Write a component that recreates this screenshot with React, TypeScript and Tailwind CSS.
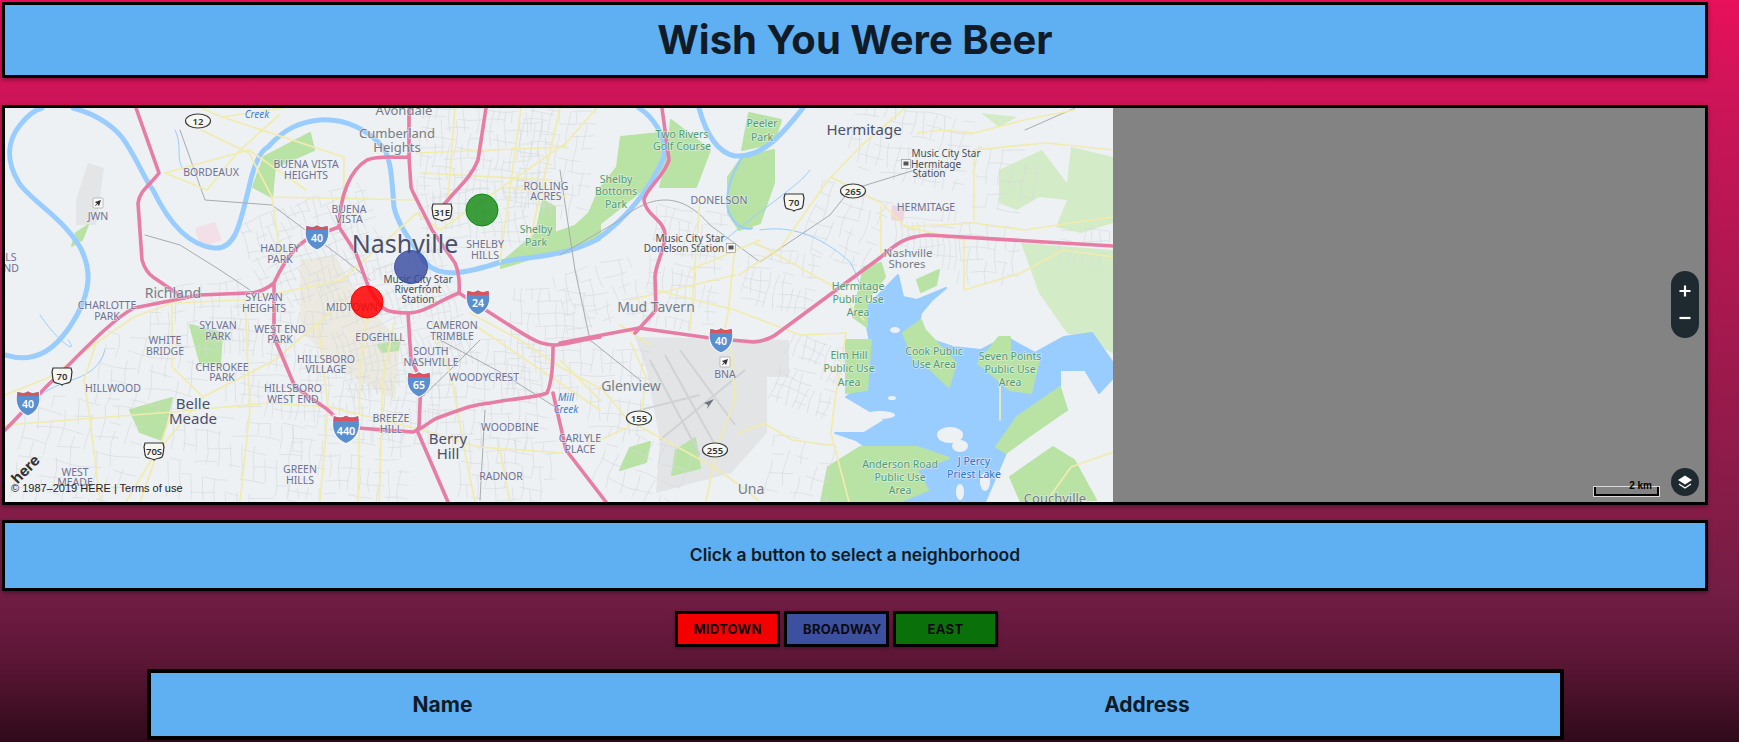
import React from 'react';

type Label = [string, number, number, number?];

// neighborhood names, upper case purple-grey
const hoods: Label[] = [
  ['BORDEAUX', 211, 176], ['BUENA VISTA', 306, 168], ['HEIGHTS', 306, 179], ['BUENA', 349, 213], ['VISTA', 349, 223],
  ['ROLLING', 546, 190], ['ACRES', 546, 200], ['SHELBY', 485, 248], ['HILLS', 485, 259], ['HADLEY', 280, 252], ['PARK', 280, 263],
  ['SYLVAN', 264, 301], ['HEIGHTS', 264, 312], ['CHARLOTTE', 107, 309], ['PARK', 107, 320], ['MIDTOWN', 352, 311],
  ['SYLVAN', 218, 329], ['PARK', 218, 340], ['WEST END', 280, 333], ['PARK', 280, 343], ['EDGEHILL', 380, 341],
  ['CAMERON', 452, 329], ['TRIMBLE', 452, 340], ['WHITE', 165, 344], ['BRIDGE', 165, 355], ['SOUTH', 431, 355], ['NASHVILLE', 431, 366],
  ['HILLSBORO', 326, 363], ['VILLAGE', 326, 373], ['CHEROKEE', 222, 371], ['PARK', 222, 381], ['WOODYCREST', 484, 381],
  ['HILLWOOD', 113, 392], ['HILLSBORO', 293, 392], ['WEST END', 293, 403], ['BREEZE', 391, 422], ['HILL', 391, 433],
  ['WOODBINE', 510, 431], ['CARLYLE', 580, 442], ['PLACE', 580, 453], ['WEST', 75, 476], ['MEADE', 75, 486],
  ['GREEN', 300, 473], ['HILLS', 300, 484], ['RADNOR', 501, 480], ['DONELSON', 719, 204], ['HERMITAGE', 926, 211],
  ['LS', 11, 261], ['ND', 11, 272], ['JWN', 98, 220], ['BNA', 725, 378],
];

const towns: Label[] = [
  ['Avondale', 404, 115, 13], ['Cumberland', 397, 138, 13], ['Heights', 397, 152, 13], ['Richland', 173, 298, 14],
  ['Mud Tavern', 656, 312, 14], ['Glenview', 631, 391, 14], ['Una', 751, 494, 14], ['Couchville', 1055, 503, 13],
  ['Nashville', 908, 257, 11.5], ['Shores', 907, 268, 11.5],
];

const cities: Label[] = [
  ['Nashville', 405, 253, 25], ['Belle', 193, 409, 15], ['Meade', 193, 424, 15], ['Berry', 448, 444, 15], ['Hill', 448, 459, 15],
  ['Hermitage', 864, 135, 15],
];

const parks: Label[] = [
  ['Shelby', 536, 233], ['Park', 536, 246], ['Peeler', 762, 127], ['Park', 762, 141], ['Two Rivers', 682, 138], ['Golf Course', 682, 150],
  ['Shelby', 616, 183], ['Bottoms', 616, 195], ['Park', 616, 208], ['Hermitage', 858, 290], ['Public Use', 858, 303], ['Area', 858, 316],
  ['Elm Hill', 849, 359], ['Public Use', 849, 372], ['Area', 849, 386], ['Cook Public', 934, 355], ['Use Area', 934, 368],
  ['Seven Points', 1010, 360], ['Public Use', 1010, 373], ['Area', 1010, 386], ['Anderson Road', 900, 468], ['Public Use', 900, 481], ['Area', 900, 494],
];

const transit: Label[] = [
  ['Music City Star', 418, 283], ['Riverfront', 418, 293], ['Station', 418, 303], ['Music City Star', 690, 242], ['Donelson Station', 684, 252],
  ['Music City Star', 946, 157], ['Hermitage', 936, 168], ['Station', 929, 177],
];

const water: Label[] = [
  ['Creek', 257, 118], ['Mill', 566, 401], ['Creek', 566, 413],
];

const lakePts = '898,275 903,297 917,300 946,288 932,300 921,313 917,333 932,340 953,347 981,350 1006,337 1035,353 1064,337 1092,333 1113,363 1113,378 1099,393 1085,370 1060,370 1060,390 1067,410 1024,423 996,443 1006,453 985,502 860,502 860,473 874,453 856,440 835,433 864,433 885,420 846,397 856,390 871,347 867,327 867,307';

// pale woodland
const forests = [
  '1021,243 1113,250 1113,353 1067,333 1039,293',
  '999,170 1042,150 1067,183 1071,147 1113,157 1113,223 1081,233 1056,227 1067,200 1039,197 1017,210 999,203',
  '981,113 1017,117 999,127',
  '1040,240 1060,262 1035,270',
];

// mown parks and public use areas
const parkShapes = [
  '621,137 660,133 669,160 646,187 596,227 560,247 560,240 589,213 599,190 617,167',
  '671,120 710,150 696,187 660,187 667,160',
  '742,157 774,150 774,183 760,223 739,230 728,213 728,177',
  '749,113 781,120 774,143 742,150',
  '501,263 536,233 543,200 555,207 555,233 600,217 600,240 540,256 501,268',
  '264,157 310,133 314,150 275,167 272,197 253,187',
  '190,325 222,333 220,365 200,362',
  '130,410 172,398 162,440 140,432',
  '76,233 88,225 82,240 72,246',
  '378,345 400,340 398,350 382,352',
  '630,448 650,442 646,462 620,470',
  '676,450 695,438 700,468 672,475',
  '903,333 921,320 925,330 956,363 949,387 931,370 914,360',
  '999,337 1010,337 1010,353 1039,360 1031,393 1010,390 978,363',
  '828,467 860,447 917,447 949,458 917,470 928,490 899,502 821,502',
  '846,340 871,340 867,390 846,393',
  '864,267 881,263 885,277 867,300 867,327 853,317',
  '917,280 939,270 936,285 921,292',
  '996,447 1017,417 1060,387 1067,410 1028,437 1006,453',
  '1053,447 1074,460 1096,500 1021,502 1010,477',
];

const rivers = [
  { d: 'M5 355 C34 364 57 352 78 313 C90 290 92 270 80 247 C60 215 30 200 19 183 C5 160 8 140 20 125 C28 115 34 110 42 108', w: 5 },
  { d: 'M73 108 C100 115 118 130 126 143 C140 165 145 180 153 190 C165 215 185 245 214 248 C235 250 240 225 249 187 C255 160 262 150 268 147 C285 128 300 122 320 120 C345 118 370 130 385 150 C392 165 392 185 394 207 C398 225 410 240 425 262 C440 280 470 272 501 262 C530 256 560 258 596 240 C625 220 650 190 664 157 C668 135 650 115 639 108', w: 5 },
  { d: 'M699 108 C705 130 715 152 735 156 C765 158 785 130 803 108', w: 5 },
  { d: 'M742 157 C728 180 722 205 732 218 C738 228 748 230 752 228', w: 2 },
  { d: 'M760 230 C790 225 820 235 850 262 C856 272 858 280 862 290', w: 1 },
  { d: 'M175 130 C185 150 170 170 195 175', w: 1 },
  { d: 'M40 315 C60 345 80 355 68 340', w: 1 },
  { d: 'M105 350 C95 385 60 375 35 400', w: 1 },
  { d: 'M725 240 C760 210 800 185 810 170', w: 1 },
];

const highways = [
  'M560 343 L639 328 L710 338 L753 342 C765 341 772 338 778 333 L881 257 C895 245 903 237 928 235 L1113 246',
  'M600 337 C580 340 565 345 555 345 C540 345 530 338 517 330 L459 293 C440 300 425 313 408 313 C395 313 388 312 383 308',
  'M459 293 C460 280 458 270 455 263 L432 230 C420 205 411 190 411 187 L409 157 L409 108',
  'M409 157 C395 158 380 155 367 160 C350 170 340 195 339 227 C325 232 315 236 306 240 C290 250 280 270 274 283 C265 290 255 293 249 293 L199 295 L134 308 C110 320 70 365 50 383 C35 398 20 415 5 430',
  'M339 227 L356 253 L367 283 C372 295 378 303 383 308',
  'M408 313 L411 360 L421 380 L419 427 L417 430 L448 502',
  'M274 283 L274 337 L295 387 L321 405 C330 410 338 420 344 427 L413 432 C425 428 430 420 440 417 C460 410 470 405 490 403 C515 398 535 398 547 393 C553 380 553 360 553 347',
  'M486 108 L478 160 C470 180 455 190 448 200 L436 213',
  'M136 108 L159 173 C150 185 140 190 138 203 L142 260 C145 270 150 275 153 277 L172 290 L184 298',
  'M662 108 L669 160 C665 175 645 190 644 200 C645 215 665 220 665 235 C665 250 655 265 655 277 L656 310 L635 333',
  'M553 393 L566 450 L606 502',
];

const arterials = [
  'M5 395 L50 377 L96 343 L134 317 L172 303 L245 300 L342 280 L417 213 L440 230',
  'M203 397 L275 360 L318 323 L344 300', 'M358 502 L360 367 L367 317', 'M379 502 L383 380 L394 323',
  'M172 412 L268 403 L329 407 L430 432 L478 447 L563 453', 'M126 502 L153 457 L203 397', 'M172 303 L172 367 L203 397',
  'M475 502 L465 453 L452 380 L432 323', 'M470 313 L520 340 L560 367 L603 390 L628 420 L714 467 L746 490 L760 502',
  'M735 247 L728 313 L724 333', 'M756 243 L831 285 L864 320', 'M739 275 L781 247 L828 180 L864 143 L905 108',
  'M631 343 L646 377 L642 410 L628 427 L600 440', 'M731 347 L735 400 L717 447 L706 502', 'M831 177 L881 203 L906 227 L964 240',
  'M881 207 L881 253', 'M903 227 L974 223 L1024 230 L1113 217', 'M964 240 L964 290 L1021 273 L1063 250 L1113 257',
  'M917 133 L942 130 L974 133 L1024 120 L1074 110', 'M974 150 L1046 143 L1113 150', 'M974 150 L974 220',
  'M846 333 L835 400 L831 433 L849 502', 'M739 433 L764 423 L792 440 L831 445', 'M1071 467 L1113 452 M1071 467 L1046 502',
  'M440 230 L566 143 L597 108', 'M455 108 L448 200', 'M421 173 L551 180', 'M417 153 L566 147', 'M509 187 L566 197', 'M521 108 L500 262', 'M560 108 L530 240',
  'M344 157 L222 117 L201 108 M283 108 L222 117', 'M165 173 L207 190 L237 153 L279 115', 'M165 173 L249 150 L306 190', 'M201 130 L249 153 L272 197 L417 200',
  'M272 197 L280 255 M344 157 L344 200', 'M100 500 L90 420 L84 380 L96 343', 'M5 425 L172 412', 'M240 502 L250 410 L245 300', 'M320 502 L328 407 L318 323',
  'M172 412 L140 502', 'M500 450 L510 502', 'M560 360 L600 400', 'M470 322 L600 410', 'M620 325 L650 345', 'M700 200 L690 330', 'M630 300 L735 275', 'M655 290 L735 310', 'M735 310 L800 335 L846 333',
  'M690 270 L760 240', 'M1000 380 L1000 420',
];

const rails = [
  'M180 130 L205 200 L272 205 L345 260 L370 280', 'M145 235 L180 245 L220 270 L250 290', 'M560 170 L575 270 L590 340 L640 380',
  'M440 340 L500 372 L560 410', 'M419 400 L450 370 L480 340', 'M560 255 L620 220 C650 195 680 190 710 225 L760 262 L830 215 L850 190 L915 170',
  'M480 500 L485 410', 'M1025 130 L1075 108',
];

// street patches: x, y, w, h, rotation, spacing
const patches: number[][] = [
  [420, 110, 130, 90, 3, 7], [520, 110, 70, 100, 5, 9], [420, 190, 120, 60, -6, 8], [250, 200, 130, 90, -20, 7], [330, 265, 130, 110, -18, 6],
  [150, 285, 90, 70, -6, 9], [230, 310, 90, 100, 5, 8], [320, 370, 120, 70, 4, 7], [430, 340, 110, 100, 4, 9], [510, 290, 80, 100, 4, 9],
  [460, 440, 90, 60, 3, 9], [290, 430, 110, 70, 4, 10], [100, 340, 100, 70, 10, 13], [20, 400, 110, 100, 10, 13], [170, 420, 130, 80, 6, 12],
  [590, 350, 50, 90, 3, 10], [650, 210, 70, 110, 8, 8], [745, 250, 70, 60, 10, 8], [560, 265, 80, 60, -15, 11],
  [780, 340, 60, 70, 20, 8], [850, 110, 110, 70, 10, 10], [895, 210, 60, 50, 0, 6], [960, 225, 60, 50, 3, 9], [810, 190, 70, 70, 20, 11],
  [975, 150, 60, 60, 5, 12], [1060, 230, 50, 30, 3, 8], [600, 440, 90, 60, 20, 14], [770, 440, 60, 60, 10, 15],
];

// wobbly, broken street lines so the patches do not read as a ruled grid
function streetPath(p: number[]) {
  const [x, y, w, h, , gap] = p;
  let d = '';
  for (let i = x; i <= x + w; i += gap) {
    for (let t = y; t < y + h; t += 12) {
      if (Math.sin(i * 3.1 + t * 1.7) > 0.55) continue;
      d += `M${(i + 1.6 * Math.sin(t * 0.13 + i)).toFixed(1)} ${t}L${(i + 1.6 * Math.sin((t + 12) * 0.13 + i)).toFixed(1)} ${t + 12}`;
    }
  }
  for (let j = y; j <= y + h; j += gap + 3) {
    for (let t = x; t < x + w; t += 12) {
      if (Math.sin(j * 2.3 + t * 1.9) > 0.55) continue;
      d += `M${t} ${(j + 1.6 * Math.sin(t * 0.11 + j)).toFixed(1)}L${t + 12} ${(j + 1.6 * Math.sin((t + 12) * 0.11 + j)).toFixed(1)}`;
    }
  }
  return d;
}

const Interstate = ({ x, y, n, s = 1 }: { x: number; y: number; n: string; s?: number }) => (
  <g transform={`translate(${x} ${y}) scale(${s})`}>
    <path d="M-11 -12 C-6 -10 -3 -10 0 -12.5 C3 -10 6 -10 11 -12 C13 -3 12 8 0 13 C-12 8 -13 -3 -11 -12Z" fill="#5a8fcf" stroke="#f4f6f8" strokeWidth="1.2" />
    <path d="M-10.5 -11 C-6 -9.5 -3 -9.5 0 -11.5 C3 -9.5 6 -9.5 10.5 -11 L10.8 -7 H-10.8Z" fill="#d8555f" />
    <text x="0" y="5" textAnchor="middle" fontSize={n.length > 2 ? 9.5 : 10.5} fontWeight="600" fill="#fff" fontFamily="'Noto Sans',sans-serif">{n}</text>
  </g>
);

const Oval = ({ x, y, n }: { x: number; y: number; n: string }) => (
  <g>
    <ellipse cx={x} cy={y} rx="12.5" ry="7" fill="#f7f7f2" stroke="#3c3c3c" strokeWidth="1.2" />
    <text x={x} y={y + 3.5} textAnchor="middle" fontSize="9.5" fontWeight="600" fill="#333" fontFamily="'Noto Sans',sans-serif">{n}</text>
  </g>
);

const UsShield = ({ x, y, n }: { x: number; y: number; n: string }) => (
  <g transform={`translate(${x} ${y})`}>
    <path d="M-9 -8 H9 L10 -4 C9 0 10 3 8 6 C5 8 2 7 0 9 C-2 7 -5 8 -8 6 C-10 3 -9 0 -10 -4Z" fill="#f7f7f2" stroke="#333" strokeWidth="1.2" />
    <text x="0" y="3.5" textAnchor="middle" fontSize="9.5" fontWeight="600" fill="#333" fontFamily="'Noto Sans',sans-serif">{n}</text>
  </g>
);

const Airport = ({ x, y }: { x: number; y: number }) => (
  <g transform={`translate(${x} ${y})`}>
    <rect x="-5" y="-5" width="10" height="10" rx="1" fill="#fbfbfb" stroke="#999" strokeWidth=".6" />
    <path d="M3 -3 L-3.2 -1 L-1 0.4 L-3 2.4 L-2.4 3 L-0.4 1 L1 3.2Z" fill="#333" />
  </g>
);

const Station = ({ x, y }: { x: number; y: number }) => (
  <g transform={`translate(${x} ${y})`}>
    <rect x="-4.5" y="-4.5" width="9" height="9" fill="#f6f6f6" stroke="#888" strokeWidth=".6" />
    <rect x="-2.5" y="-2.5" width="5" height="4" fill="#555" />
  </g>
);

function Labels({ items, size, fill, italic }: { items: Label[]; size: number; fill: string; italic?: boolean }) {
  return (
    <>
      {items.map(([t, x, y, s], i) => (
        <text
          key={i}
          x={x}
          y={y}
          textAnchor="middle"
          fontSize={s ?? size}
          fill={fill}
          fontStyle={italic ? 'italic' : undefined}
          fontFamily="'Noto Sans',sans-serif"
          stroke="#eef2f5"
          strokeWidth="1.6"
          paintOrder="stroke"
          strokeOpacity=".6"
        >
          {t}
        </text>
      ))}
    </>
  );
}

const NashvilleMap = () => (
  <svg viewBox="5 108 1108 394" className="block h-[394px] w-[1108px] shrink-0 bg-[#edf1f4]">
    {/* airports and built up ground */}
    <polygon points="635,337 789,340 789,377 767,377 767,433 731,473 656,493 660,440 646,367" fill="#e2e4e6" />
    <polygon points="88,163 104,168 96,225 76,225 76,200" fill="#e3e5e7" />
    <polygon points="300,260 335,255 360,300 400,340 395,400 340,370 300,330" fill="#ebe9e0" />
    <polygon points="195,228 215,222 222,240 200,248" fill="#f3dfe6" />
    <polygon points="892,205 905,208 903,222 891,220" fill="#efd5dc" />
    {forests.map((p, i) => <polygon key={i} points={p} fill="#d3ebc7" />)}
    <polygon points={lakePts} fill="#9acdff" strokeLinejoin="round" stroke="#9acdff" strokeWidth="2" />
    {parkShapes.map((p, i) => <polygon key={i} points={p} fill="#b9e2a5" strokeLinejoin="round" stroke="#b9e2a5" strokeWidth="2" />)}
    <g fill="#edf1f4">
      <ellipse cx="895" cy="330" rx="5" ry="3" />
      <ellipse cx="950" cy="435" rx="13" ry="8" />
      <ellipse cx="960" cy="446" rx="8" ry="6" />
      <ellipse cx="880" cy="415" rx="15" ry="4" />
      <ellipse cx="960" cy="492" rx="4" ry="8" />
      <ellipse cx="985" cy="482" rx="5" ry="9" />
      <ellipse cx="892" cy="398" rx="4" ry="2" />
    </g>
    {/* minor streets */}
    <g stroke="#d6dadc" strokeWidth=".6" fill="none">
      {patches.map((p, i) => (
        <path key={i} d={streetPath(p)} transform={`rotate(${p[4]} ${p[0] + p[2] / 2} ${p[1] + p[3] / 2})`} />
      ))}
    </g>
    {/* runways */}
    <g stroke="#d0d2d4" strokeWidth="2">
      <path d="M650 360L700 455M665 355L715 445M680 350L735 425M640 410L700 395M660 440L745 370" />
    </g>
    <g fill="none" strokeLinecap="round" strokeLinejoin="round">
      {rivers.map((r, i) => <path key={i} d={r.d} stroke="#9acdff" strokeWidth={r.w} />)}
      {rails.map((d, i) => <path key={i} d={d} stroke="#a9abac" strokeWidth="1" />)}
      {arterials.map((d, i) => <path key={i} d={d} stroke="#f1ebad" strokeWidth="1.7" />)}
      {highways.map((d, i) => <path key={i} d={d} stroke="#e77ca5" strokeWidth="3.6" />)}
    </g>
    <Labels items={hoods} size={10.5} fill="#6f7191" />
    <Labels items={towns} size={13} fill="#777c84" />
    <Labels items={cities} size={15} fill="#4b4f68" />
    <Labels items={parks} size={10.5} fill="#4f9c70" />
    <Labels items={transit} size={10} fill="#4a4c55" />
    <Labels items={water} size={10} fill="#3d7fd0" italic />
    <Labels items={[['J Percy', 974, 465], ['Priest Lake', 974, 478]]} size={10.5} fill="#2f74c9" />
    <Oval x={198} y={121} n="12" />
    <Oval x={853} y={191} n="265" />
    <Oval x={639} y={418} n="155" />
    <Oval x={715} y={450} n="255" />
    <UsShield x={442} y={212} n="31E" />
    <UsShield x={794} y={202} n="70" />
    <UsShield x={62} y={376} n="70" />
    <UsShield x={154} y={451} n="70S" />
    <Interstate x={317} y={237} n="40" />
    <Interstate x={478} y={302} n="24" />
    <Interstate x={28} y={403} n="40" />
    <Interstate x={419} y={384} n="65" />
    <Interstate x={346} y={429} n="440" s={1.15} />
    <Interstate x={721} y={340} n="40" />
    <Airport x={98} y={203} />
    <Airport x={725} y={362} />
    <Station x={731} y={248} />
    <Station x={906} y={164} />
    <path d="M714 399L704 403L708 405L707 409Z" fill="#6f7580" />
    <circle cx="482" cy="210" r="16" fill="#008000" fillOpacity=".75" stroke="#008000" strokeOpacity=".85" />
    <circle cx="411" cy="267" r="16.5" fill="#34499f" fillOpacity=".8" stroke="#34499f" strokeOpacity=".85" />
    <circle cx="367" cy="302" r="16" fill="#ff0000" fillOpacity=".85" stroke="#ff0000" />
  </svg>
);

const panel = 'border-[3px] border-black bg-[#5eb0f2] shadow-[0_2px_4px_rgba(0,0,0,0.35)]';
const btn = 'h-[36px] w-[105px] border-[3px] border-black pt-[2px] text-[13px] font-bold tracking-[0.3px] text-[#0b0b0f] uppercase shadow-[0_1px_3px_rgba(0,0,0,0.35)]';

export default function App() {
  return (
    <div className="min-h-screen overflow-hidden bg-[linear-gradient(180deg,#e8105a_0%,#cf1458_12%,#841c47_69%,#721d44_80%,#5c1636_89%,#2f0a1a_100%)] px-[2px] pt-[2px] [font-family:Inter,sans-serif]">
      <div className="w-[1706px]">
        <header className={`${panel} flex h-[76px] items-center justify-center`}>
          <h1 className="text-[40px] font-bold text-[#101b27]">Wish You Were Beer</h1>
        </header>

        <div className="relative mt-[27px] flex h-[400px] border-[3px] border-black bg-[#838383] shadow-[0_2px_4px_rgba(0,0,0,0.3)]">
          <NashvilleMap />
          <div className="absolute bottom-[8px] left-[6px] text-[11px] leading-none text-[#222] [font-family:'Liberation_Sans',sans-serif]">© 1987–2019 HERE | Terms of use</div>
          <div className="absolute bottom-[16px] left-[14px] origin-bottom-left -rotate-45 text-[15px] leading-none font-bold text-[#333]">here</div>

          <div className="absolute top-[163px] right-[6px] flex h-[67px] w-[28px] flex-col items-center justify-between rounded-full bg-[#1f2a30] py-[13px]">
            <svg width="14" height="14" viewBox="0 0 14 14"><path d="M7 1.5V12.5M1.5 7H12.5" stroke="#fff" strokeWidth="2.2" /></svg>
            <svg width="14" height="14" viewBox="0 0 14 14"><path d="M1.5 7H12.5" stroke="#fff" strokeWidth="2.2" /></svg>
          </div>

          <div className="absolute right-[46px] bottom-[6px] flex h-[9px] w-[65px] items-end justify-end border-x-2 border-b-2 border-black pr-[5px] outline outline-white/70">
            <span className="relative top-[-3px] text-[10px] leading-none font-bold text-black [font-family:'Liberation_Sans',sans-serif]">2 km</span>
          </div>
          <div className="absolute right-[6px] bottom-[6px] flex h-[28px] w-[28px] items-center justify-center rounded-full bg-[#1f2a30]">
            <svg width="16" height="16" viewBox="0 0 16 16">
              <path d="M8 1.5L15 6L8 10.5L1 6Z" fill="#fff" />
              <path d="M2 10L8 14L14 10" fill="none" stroke="#fff" strokeWidth="1.3" />
            </svg>
          </div>
        </div>

        <div className={`${panel} mt-[15px] flex h-[71px] items-center justify-center`}>
          <p className="text-[17.5px] font-semibold text-[#101b27]">Click a button to select a neighborhood</p>
        </div>

        <div className="mt-[20px] flex justify-center gap-[4px] pr-[37px]">
          <button className={`${btn} bg-[#f50000]`}>Midtown</button>
          <button className={`${btn} bg-[#3c50a0] pl-[16px] text-left`}>Broadway</button>
          <button className={`${btn} bg-[#0a700a]`}>East</button>
        </div>

        <div className="mx-auto mt-[22px] grid h-[71px] w-[1417px] grid-cols-[584px_1fr] items-center border-4 border-black bg-[#5eb0f2] text-center text-[21px] font-bold text-[#101b27]">
          <div>Name</div>
          <div>Address</div>
        </div>
      </div>
    </div>
  );
}
